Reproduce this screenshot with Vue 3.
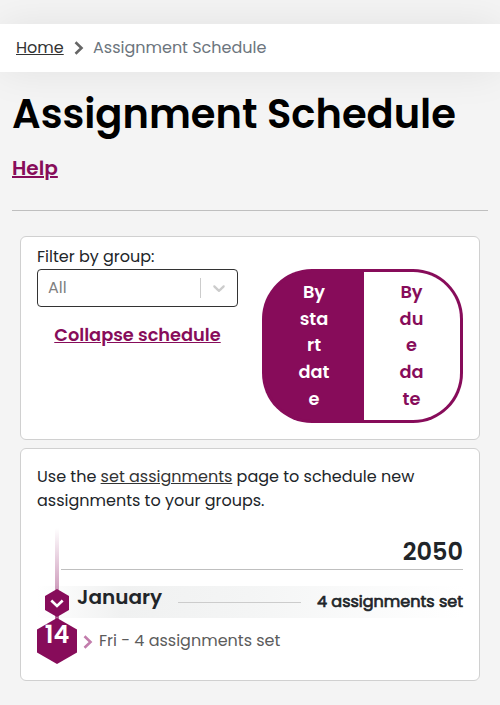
<script setup>
import { ref } from 'vue'

const startLines = ['By', 'sta', 'rt', 'dat', 'e']
const dueLines = ['By', 'du', 'e', 'da', 'te']
const mode = ref('start')
</script>

<template>
  <div class="page">
    <nav class="crumbs">
      <a href="#" class="home">Home</a>
      <svg class="crumb-arrow" width="10" height="14" viewBox="0 0 10 14"><path d="M1.5 1.2 7.5 7 1.5 12.8" /></svg>
      <span class="current">Assignment Schedule</span>
    </nav>
    <main>
      <h1>Assignment Schedule</h1>
      <div><a href="#" class="help">Help</a></div>
      <hr />
      <section class="card filters">
        <div class="left">
          <label>Filter by group:</label>
          <div class="select">
            <span class="value">All</span>
            <span class="sep"></span>
            <svg width="20" height="20" viewBox="0 0 20 20"><path d="M4.516 7.548c0.436-0.446 1.043-0.481 1.576 0l3.908 3.747 3.908-3.747c0.533-0.481 1.141-0.446 1.574 0 0.436 0.445 0.408 1.197 0 1.615-0.406 0.418-4.695 4.502-4.695 4.502-0.217 0.223-0.502 0.335-0.787 0.335s-0.57-0.112-0.789-0.335c0 0-4.287-4.084-4.695-4.502s-0.436-1.17 0-1.615z" /></svg>
          </div>
          <a href="#" class="collapse">Collapse schedule</a>
        </div>
        <div class="toggle">
          <button :class="{ on: mode === 'start' }" @click="mode = 'start'">
            <span v-for="(l, i) in startLines" :key="i">{{ l }}</span>
          </button>
          <button :class="{ on: mode === 'due' }" @click="mode = 'due'">
            <span v-for="(l, i) in dueLines" :key="i">{{ l }}</span>
          </button>
        </div>
      </section>
      <section class="card schedule">
        <p>Use the <a href="#">set assignments</a> page to schedule new<br />assignments to your groups.</p>
        <div class="timeline">
          <div class="year"><span>2050</span></div>
          <div class="month">
            <svg class="hex-small" width="24" height="28" viewBox="0 0 24 28"><path class="fill" d="M12 0 24 7V21L12 28 0 21V7Z" /><path class="tick" d="M6.3 11.5 12 17 17.7 11.5" /></svg>
            <span class="name">January</span>
            <span class="rule"></span>
            <span class="count">4 assignments set</span>
          </div>
          <div class="day">
            <div class="hex-wrap">
              <svg width="40" height="46" viewBox="0 0 40 46"><path class="fill" d="M20 0 40 11.5V34.5L20 46 0 34.5V11.5Z" /></svg>
              <span class="num">14</span>
            </div>
            <svg class="day-arrow" width="10" height="14" viewBox="0 0 10 14"><path d="M1.5 1.2 7.5 7 1.5 12.8" /></svg>
            <span class="day-text">Fri - 4 assignments set</span>
          </div>
          <div class="stem"></div>
        </div>
      </section>
    </main>
  </div>
</template>

<style>
body { background: #f4f4f4; overflow-x: hidden; }
</style>

<style scoped>
* { box-sizing: border-box; }
.page {
  height: 705px;
  padding-top: 24px;
  overflow: hidden;
  background: #f4f4f4;
  color: #212529;
  font-family: Poppins, Inter, "Liberation Sans", sans-serif;
  font-size: 16px;
  line-height: 24px;
  white-space: nowrap;
}
.crumbs {
  display: flex;
  align-items: center;
  height: 48px;
  padding-left: 16px;
  background: #fff;
  box-shadow: 0 0 40px rgba(0, 0, 0, .08);
}
a { color: #333; text-decoration: underline; }
.home { width: 48px; }
.crumb-arrow { margin: -1px 9px 0 10px; }
.crumb-arrow path, .day-arrow path { fill: none; stroke: #666; stroke-width: 2.6; }
.current { color: #6c757d; }
main { padding: 0 12px; }
h1 {
  margin: 18px 0 0;
  color: #000;
  font-size: 40px;
  line-height: 48px;
  font-weight: 600;
}
.help {
  display: inline-block;
  margin-top: 15px;
  color: #870c5a;
  font-size: 20px;
  line-height: 30px;
  font-weight: 600;
}
hr { height: 1px; margin: 27px 0 25px; border: 0; background: #bfbfbf; }
.card {
  margin: 0 8px;
  padding: 0 16px;
  background: #fff;
  border: 1px solid #d0d0d0;
  border-radius: 6px;
}
.filters { display: flex; gap: 24px; height: 204px; }
.left { display: flex; flex-direction: column; width: 201px; padding-top: 8px; }
.select {
  display: flex;
  align-items: center;
  height: 38px;
  padding: 0 8px 0 10px;
  border: 1px solid #333;
  border-radius: 4px;
}
.value { flex: 1; color: #808080; }
.sep { width: 1px; height: 20px; margin-right: 8px; background: #ccc; }
.select svg { fill: #ccc; }
.collapse {
  align-self: center;
  margin-top: 14px;
  color: #870c5a;
  font-size: 17.76px;
  line-height: 27px;
  font-weight: 600;
}
.toggle {
  display: flex;
  width: 201px;
  height: 154px;
  margin-top: 32px;
  padding: 3px;
  overflow: hidden;
  background: #870c5a;
  border-radius: 50px;
}
.toggle button {
  display: flex;
  flex-direction: column;
  align-items: center;
  width: 96px;
  padding: 7px 1px 0 0;
  border: 0;
  border-radius: 0 47px 47px 0;
  background: #fff;
  color: #870c5a;
  font: 600 17.76px/26.7px Poppins, Inter, sans-serif;
}
.toggle button:first-child { width: 99px; border-radius: 47px 0 0 47px; }
.toggle button.on { background: #870c5a; color: #fff; }
.schedule { height: 233px; margin-top: 8px; padding-top: 16px; }
p { margin: 0; }
.timeline { position: relative; margin-top: 17px; }
.stem {
  position: absolute;
  left: 18px;
  top: -2px;
  width: 4px;
  height: 92px;
  background: linear-gradient(#870c5a00, #870c5a99);
}
.year {
  display: flex;
  justify-content: flex-end;
  height: 40px;
  margin-left: 24px;
  border-bottom: 1px solid #bfbfbf;
  font-size: 24px;
  line-height: 44px;
  font-weight: 600;
}
.month {
  display: flex;
  align-items: center;
  height: 32px;
  margin-top: 16px;
  padding-left: 8px;
  background: linear-gradient(90deg, #fff, #f0f1f1 20%, #f4f5f5 50%, #fff);
}
.fill { fill: #870c5a; }
.hex-small { position: relative; z-index: 1; margin-top: 2px; }
.tick { fill: none; stroke: #fff; stroke-width: 2.6; }
.name { width: 85px; margin: -10px 16px 0 8px; font-size: 20px; font-weight: 600; }
.rule { width: 123px; height: 1px; background: #ccc; }
.count { width: 146px; margin: -1px 0 0 16px; -webkit-text-stroke: .7px #212529; }
.day { display: flex; height: 46px; }
.hex-wrap { position: relative; width: 40px; height: 46px; }
.num {
  position: absolute;
  inset: 2px 0 auto;
  text-align: center;
  color: #fff;
  font-size: 24px;
  line-height: 30px;
  font-weight: 600;
}
.day-arrow { margin: 17px 6px 0; }
.day-arrow path { stroke: #c27dac; }
.day-text { margin-top: 11px; color: #5c5c5c; }
</style>
